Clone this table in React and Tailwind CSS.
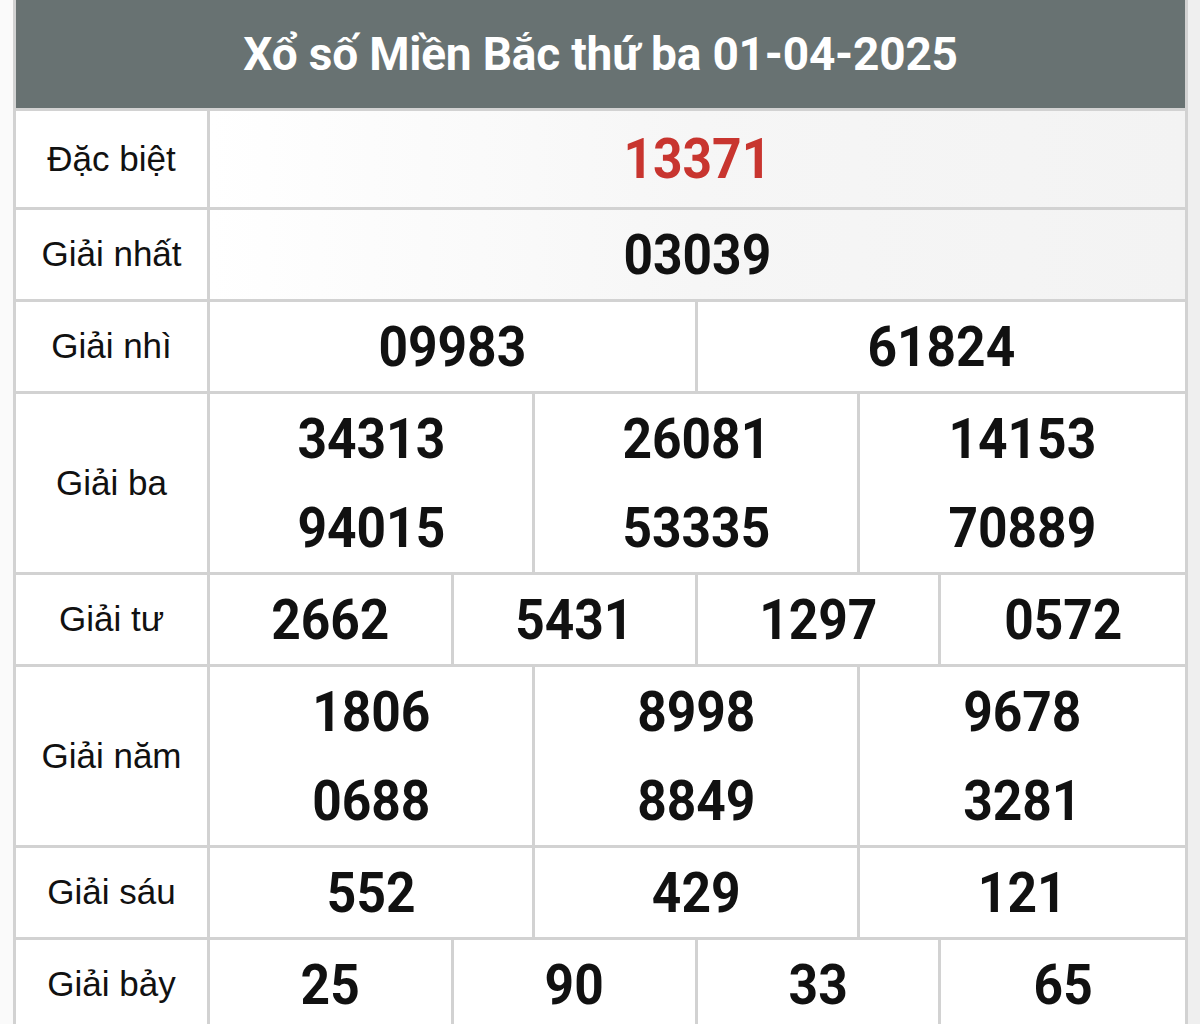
import React from 'react';

const rows = [
  { label: 'Đặc biệt', cols: 1, nums: ['13371'], lines: 1, red: true, tall: true },
  { label: 'Giải nhất', cols: 1, nums: ['03039'], lines: 1 },
  { label: 'Giải nhì', cols: 2, nums: ['09983', '61824'], lines: 1 },
  { label: 'Giải ba', cols: 3, nums: ['34313', '26081', '14153', '94015', '53335', '70889'], lines: 2 },
  { label: 'Giải tư', cols: 4, nums: ['2662', '5431', '1297', '0572'], lines: 1 },
  { label: 'Giải năm', cols: 3, nums: ['1806', '8998', '9678', '0688', '8849', '3281'], lines: 2 },
  { label: 'Giải sáu', cols: 3, nums: ['552', '429', '121'], lines: 1 },
  { label: 'Giải bảy', cols: 4, nums: ['25', '90', '33', '65'], lines: 1 },
];

const gridCols = {
  1: 'grid-cols-1',
  2: 'grid-cols-2',
  3: 'grid-cols-3',
  4: 'grid-cols-4',
};

const Num = ({ value, red }) => (
  <span
    className={`inline-block scale-x-[0.92] text-[56px] leading-none font-bold ${
      red ? 'text-[#c8352f]' : 'text-[#111]'
    }`}
    style={{ fontFamily: 'Roboto, "Liberation Sans", sans-serif' }}
  >
    {value}
  </span>
);

const Row = ({ row }) => {
  // split numbers into columns; two-line rows stack top/bottom in each column
  const columns = Array.from({ length: row.cols }, (_, c) =>
    Array.from({ length: row.lines }, (_, l) => row.nums[l * row.cols + c])
  );
  const lineH = row.tall ? 'h-[96px]' : 'h-[89px]';

  return (
    <div className="flex border-t-[3px] border-[#d2d2d2]">
      <div className="w-[194px] shrink-0 flex items-center justify-center border-r-[3px] border-[#d2d2d2]">
        <span
          className="text-[35px] text-[#111]"
          style={{ fontFamily: '"Liberation Sans", Arial, sans-serif' }}
        >
          {row.label}
        </span>
      </div>
      <div
        className={`flex-1 grid ${gridCols[row.cols]} divide-x-[3px] divide-[#d2d2d2] ${
          row.cols === 1 ? 'bg-gradient-to-r from-white via-[#f6f6f6] to-[#f3f3f3]' : 'bg-white'
        }`}
      >
        {columns.map((col, i) => (
          <div key={i} className="flex flex-col">
            {col.map((n, j) => (
              <div key={j} className={`${lineH} flex items-center justify-center`}>
                <Num value={n} red={row.red} />
              </div>
            ))}
          </div>
        ))}
      </div>
    </div>
  );
};

export default function App() {
  return (
    <div className="w-[1200px] h-[1024px] overflow-hidden bg-white flex">
      <div className="w-[13px] shrink-0 bg-[#fafafa]" />
      <div className="w-[1175px] shrink-0 border-x-[3px] border-[#d2d2d2] bg-white">
        <div className="h-[108px] bg-[#687272] flex items-center justify-center">
          <h1
            className="text-white text-[46px] font-bold tracking-[-0.2px]"
            style={{ fontFamily: 'Roboto, "Liberation Sans", sans-serif' }}
          >
            Xổ số Miền Bắc thứ ba 01-04-2025
          </h1>
        </div>
        {rows.map((r) => (
          <Row key={r.label} row={r} />
        ))}
      </div>
      <div className="flex-1 bg-[#efefef]" />
    </div>
  );
}
